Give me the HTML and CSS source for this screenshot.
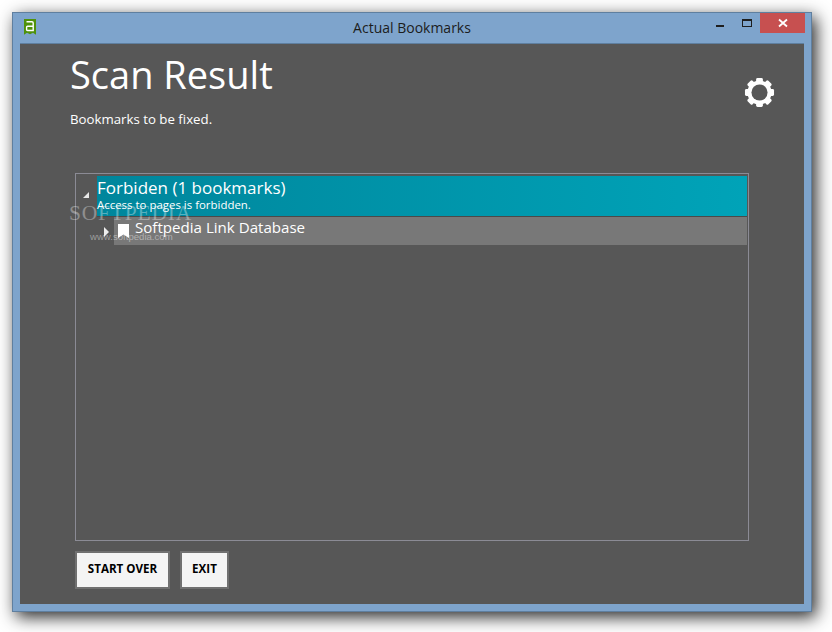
FILE: index.html
```html
<!DOCTYPE html>
<html lang="en">
<head>
<meta charset="utf-8">
<title>Actual Bookmarks</title>
<link rel="stylesheet" href="styles.css">
</head>
<body>
<div class="window">
  <header class="titlebar">
    <svg class="app-icon" width="12" height="16" viewBox="0 0 12 16"><path d="M0 0H12V15.8L9 13.8 6 15.2 3 13.8 0 15.8Z" fill="#4f920a"/><path d="M2.5 2.8H8Q9.2 2.8 9.2 4V11.5H3.6Q2.6 11.5 2.6 10.5V8.2Q2.6 7.2 3.6 7.2H9.2" fill="none" stroke="#fff" stroke-width="1.4"/></svg>
    <div class="title">Actual Bookmarks</div>
    <div class="controls">
      <span class="min"></span>
      <span class="max"></span>
      <span class="close"><svg width="10" height="10" viewBox="0 0 10 10"><path d="M1 1.5 9 8.5M9 1.5 1 8.5" stroke="#fff" stroke-width="1.8"/></svg></span>
    </div>
  </header>
  <main class="content">
    <div class="head">
      <div>
        <h1>Scan Result</h1>
        <p class="sub">Bookmarks to be fixed.</p>
      </div>
      <svg class="gear" width="31" height="31" viewBox="0 0 32 32"><g fill="#fff"><circle cx="16" cy="16" r="12.5"/><rect x="12.5" y="1" width="7" height="30" rx="1.5"/><rect x="12.5" y="1" width="7" height="30" rx="1.5" transform="rotate(45 16 16)"/><rect x="12.5" y="1" width="7" height="30" rx="1.5" transform="rotate(90 16 16)"/><rect x="12.5" y="1" width="7" height="30" rx="1.5" transform="rotate(135 16 16)"/></g><circle cx="16" cy="16" r="8.3" fill="#575757"/></svg>
    </div>
    <section class="tree">
      <div class="group">
        <span class="tri-open"></span>
        <div class="group-text">
          <div class="group-name">Forbiden (1 bookmarks)</div>
          <div class="group-desc">Access to pages is forbidden.</div>
        </div>
      </div>
      <div class="item-row">
        <span class="tri-closed"></span>
        <div class="item">
          <svg class="mark" width="11" height="14" viewBox="0 0 11 14"><path d="M0 0H11V14L5.5 10.5 0 14Z" fill="#fff"/></svg>
          <span class="item-name">Softpedia Link Database</span>
        </div>
      </div>
    </section>
    <footer class="buttons">
      <button class="btn start">START OVER</button>
      <button class="btn exit">EXIT</button>
    </footer>
  </main>
  <div class="wm">SOFTPEDIA</div>
  <div class="wm-url">www.softpedia.com</div>
</div>
</body>
</html>
```
FILE: styles.css
```css
html, body { margin: 0; padding: 0; background: #fff; }
body { width: 832px; height: 632px; overflow: hidden; font-family: "Open Sans", "Noto Sans", sans-serif; }
.window {
  position: relative;
  box-sizing: border-box;
  width: 800px; height: 600px;
  margin: 12px 0 0 12px;
  background: #7ea4cc;
  border: 1px solid #5f7f9f;
  box-shadow: 4px 5px 16px rgba(0,0,0,.85);
  display: flex; flex-direction: column;
}
.titlebar { position: relative; height: 30px; flex: none; display: flex; justify-content: center; }
.app-icon { position: absolute; left: 11px; top: 6px; }
.title { font-size: 14px; line-height: 30px; color: #1c1c1c; }
.controls { position: absolute; right: 6px; top: 0; display: flex; align-items: flex-start; }
.min { width: 8px; height: 2px; background: #1e1e1e; margin: 12px 18px 0 0; }
.max { box-sizing: border-box; width: 10px; height: 8px; border: 1px solid #1e1e1e; border-top-width: 2px; margin: 6px 8px 0 0; }
.close { width: 45px; height: 20px; background: #c75050; display: flex; align-items: center; justify-content: center; }
.content {
  flex: 1;
  margin: 0 7px 7px 7px;
  background: #575757;
  border-top: 1px solid #5f7f9f;
  color: #fff;
  padding: 0 55px;
  display: flex; flex-direction: column;
}
.head { display: flex; justify-content: space-between; height: 129px; flex: none; margin-left: -5px; }
h1 { margin: 4px 0 0; font-size: 38px; line-height: 52px; font-weight: 400; }
.sub { margin: 10px 0 0; font-size: 13.25px; line-height: 18px; }
.gear { margin: 33px -26px 0 0; }
.tree {
  box-sizing: border-box;
  width: 674px; height: 368px; flex: none;
  border: 1px solid #8b8b95;
  padding: 2px 0 0;
  display: flex; flex-direction: column;
}
.group {
  height: 40px; flex: none; position: relative;
  margin: 0 1px 0 21px;
  background: linear-gradient(90deg, #00869c, #00a3b8);
  border-bottom: 1px solid #4a4a4a;
}
.group-name { font-size: 17px; line-height: 20px; padding-top: 2px; }
.group-desc { font-size: 11.45px; line-height: 14px; }
.tri-open { position: absolute; left: -14px; top: 16px; width: 0; height: 0; border-left: 6px solid transparent; border-bottom: 6px solid #e8e8e8; }
.item-row { position: relative; height: 28px; flex: none; margin: 0 1px 0 38px; }
.tri-closed { position: absolute; left: -10px; top: 10px; width: 0; height: 0; border-left: 5px solid #eee; border-top: 5px solid transparent; border-bottom: 5px solid transparent; }
.item { height: 28px; background: #787878; display: flex; align-items: flex-start; padding-left: 4px; }
.mark { margin-top: 7px; flex: none; }
.item-name { font-size: 15.1px; line-height: 20px; margin-left: 6px; }
.buttons { display: flex; gap: 10px; margin-top: 10px; }
.btn {
  box-sizing: border-box; height: 38px; padding: 0 0 4px;
  background: #f4f4f4; border: 2px solid #707070;
  color: #000; font-family: inherit; font-size: 11.6px; font-weight: 700;
}
.start { width: 95px; }
.exit { width: 49px; }
.wm { position: absolute; left: 56px; top: 188px; font-family: "Liberation Serif", serif; font-size: 21.5px; letter-spacing: .8px; color: rgba(255,255,255,.34); line-height: 24px; }
.wm-url { position: absolute; left: 77px; top: 217px; font-family: "Liberation Sans", sans-serif; font-size: 9.6px; color: rgba(255,255,255,.42); line-height: 14px; }
```
